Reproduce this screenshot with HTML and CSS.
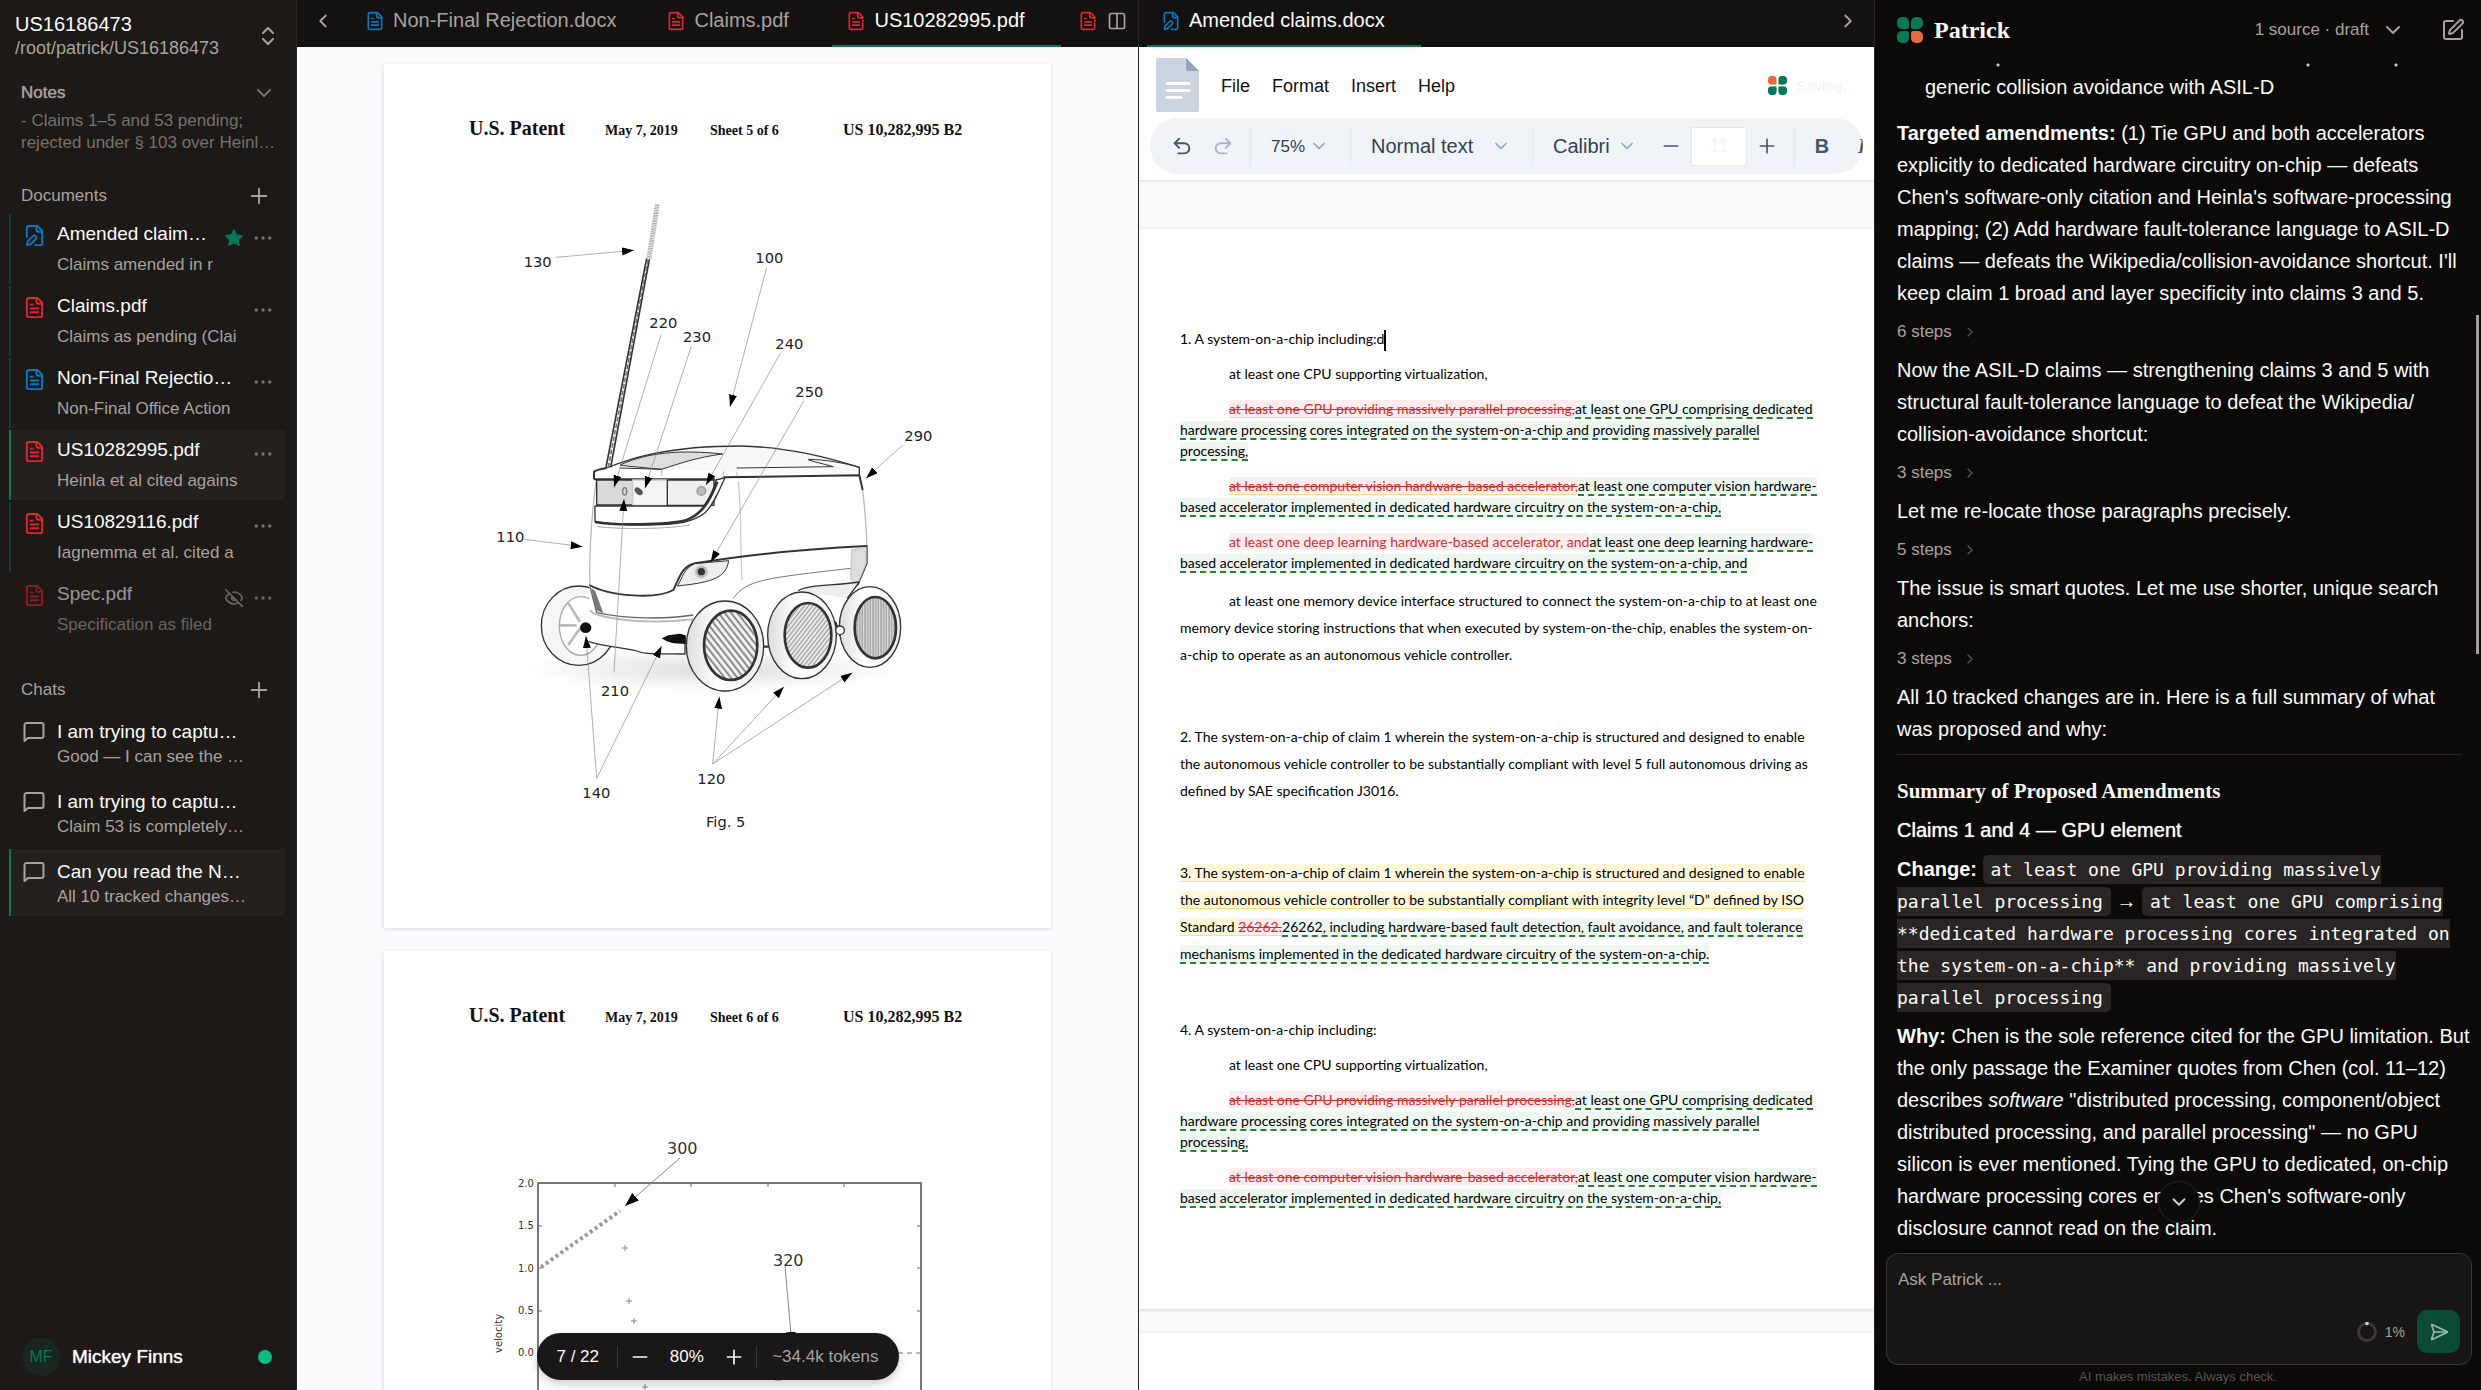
FILE: index.html
```html
<!DOCTYPE html>
<html lang="en">
<head>
<meta charset="utf-8">
<meta name="viewport" content="width=device-width, initial-scale=1">
<title>Patrick – US16186473</title>
<link rel="stylesheet" href="styles.css">
</head>
<body>
<svg class="sprite" aria-hidden="true">
  <symbol id="file" viewBox="0 0 24 24"><path d="M15 2H6a2 2 0 0 0-2 2v16a2 2 0 0 0 2 2h12a2 2 0 0 0 2-2V7Z"/><path d="M14 2v4a2 2 0 0 0 2 2h4M10 9H8M16 13H8M16 17H8"/></symbol>
  <symbol id="file-pen" viewBox="0 0 24 24"><path d="M12.5 22H18a2 2 0 0 0 2-2V7l-5-5H6a2 2 0 0 0-2 2v9.500"/><path d="M14 2v4a2 2 0 0 0 2 2h4"/><path d="M13.378 15.626a1 1 0 1 0-3.004-3.004l-5.010 5.012a2 2 0 0 0-.506.854l-.837 2.870a.5.5 0 0 0 .62.620l2.870-.837a2 2 0 0 0 .854-.506z"/></symbol>
  <symbol id="down" viewBox="0 0 24 24"><path d="m6 9 6 6 6-6"/></symbol>
  <symbol id="left" viewBox="0 0 24 24"><path d="m15 18-6-6 6-6"/></symbol>
  <symbol id="right" viewBox="0 0 24 24"><path d="m9 18 6-6-6-6"/></symbol>
  <symbol id="updown" viewBox="0 0 24 24"><path d="m7 15 5 5 5-5M7 9l5-5 5 5"/></symbol>
  <symbol id="plus" viewBox="0 0 24 24"><path d="M4 12h16M12 4v16"/></symbol>
  <symbol id="minus" viewBox="0 0 24 24"><path d="M4 12h16"/></symbol>
  <symbol id="star" viewBox="0 0 24 24"><path fill="currentColor" d="M12 2.500l2.900 6 6.600.9-4.800 4.600 1.200 6.500-5.900-3.100-5.900 3.100 1.200-6.500L2.500 9.400l6.600-.9z"/></symbol>
  <symbol id="dots" viewBox="0 0 24 24"><g fill="currentColor" stroke="none"><circle cx="3" cy="12" r="2.200"/><circle cx="12" cy="12" r="2.200"/><circle cx="21" cy="12" r="2.200"/></g></symbol>
  <symbol id="eye-off" viewBox="0 0 24 24"><path d="M10.700 5.100a10.700 10.700 0 0 1 11.200 6.500 1 1 0 0 1 0 .7 10.700 10.700 0 0 1-1.400 2.500M14.100 14.200a3 3 0 0 1-4.200-4.200M17.500 17.500a10.700 10.700 0 0 1-15.400-5.200 1 1 0 0 1 0-.7 10.700 10.700 0 0 1 4.400-5.100M2 2l20 20"/></symbol>
  <symbol id="message" viewBox="0 0 24 24"><path d="M21.500 16a2 2 0 0 1-2 2H6l-3.500 3V5a2 2 0 0 1 2-2h15a2 2 0 0 1 2 2z"/></symbol>
  <symbol id="columns" viewBox="0 0 24 24"><rect x="3" y="3" width="18" height="18" rx="2"/><path d="M12 3v18"/></symbol>
  <symbol id="undo" viewBox="0 0 24 24"><path d="M9 14 4 9l5-5"/><path d="M4 9h10.500a5.500 5.500 0 0 1 0 11H8"/></symbol>
  <symbol id="redo" viewBox="0 0 24 24"><path d="m15 14 5-5-5-5"/><path d="M20 9H9.500a5.500 5.500 0 0 0 0 11H16"/></symbol>
  <symbol id="compose" viewBox="0 0 24 24"><path d="M12 3H5a2 2 0 0 0-2 2v14a2 2 0 0 0 2 2h14a2 2 0 0 0 2-2v-7"/><path d="M18.375 2.625a1 1 0 0 1 3 3l-9.013 9.014a2 2 0 0 1-.853.505l-2.873.840a.5.5 0 0 1-.62-.62l.84-2.873a2 2 0 0 1 .506-.852z"/></symbol>
  <symbol id="send" viewBox="0 0 24 24"><path d="M3.714 3.048a.498.498 0 0 0-.683.627l2.843 7.627a2 2 0 0 1 0 1.396l-2.842 7.627a.498.498 0 0 0 .682.627l18-8.500a.5.5 0 0 0 0-.904z"/><path d="M6 12h16"/></symbol>
  <symbol id="petal" viewBox="0 0 12 12"><path d="M5 0h2a5 5 0 0 1 5 5v5a2 2 0 0 1-2 2H5a5 5 0 0 1-5-5V5a5 5 0 0 1 5-5z"/></symbol>
</svg>

<div class="app">
  <aside class="sidebar">
    <header class="matter">
      <div>
        <h1 class="matter-name">US16186473</h1>
        <p class="matter-path">/root/patrick/US16186473</p>
      </div>
      <button class="icon-btn" aria-label="Switch matter"><svg class="i24"><use href="#updown"/></svg></button>
    </header>

    <section class="notes">
      <div class="section-head"><h2>Notes</h2><button class="icon-btn dim" aria-label="Expand notes"><svg class="i24"><use href="#down"/></svg></button></div>
      <p class="notes-text">- Claims 1–5 and 53 pending;<br>rejected under § 103 over Heinl…</p>
    </section>

    <section class="docs">
      <div class="section-head"><h2>Documents</h2><button class="icon-btn" aria-label="Add document"><svg class="i22"><use href="#plus"/></svg></button></div>
      <ul class="list">
        <li class="doc"><svg class="i23 blue"><use href="#file-pen"/></svg><div class="doc-text"><a href="#">Amended claim…</a><p>Claims amended in r</p></div><svg class="i20 star"><use href="#star"/></svg><button class="icon-btn more" aria-label="More"><svg class="i18"><use href="#dots"/></svg></button></li>
        <li class="doc"><svg class="i23 red"><use href="#file"/></svg><div class="doc-text"><a href="#">Claims.pdf</a><p>Claims as pending (Clai</p></div><button class="icon-btn more" aria-label="More"><svg class="i18"><use href="#dots"/></svg></button></li>
        <li class="doc"><svg class="i23 blue"><use href="#file"/></svg><div class="doc-text"><a href="#">Non-Final Rejectio…</a><p>Non-Final Office Action</p></div><button class="icon-btn more" aria-label="More"><svg class="i18"><use href="#dots"/></svg></button></li>
        <li class="doc active"><svg class="i23 red"><use href="#file"/></svg><div class="doc-text"><a href="#">US10282995.pdf</a><p>Heinla et al cited agains</p></div><button class="icon-btn more" aria-label="More"><svg class="i18"><use href="#dots"/></svg></button></li>
        <li class="doc"><svg class="i23 red"><use href="#file"/></svg><div class="doc-text"><a href="#">US10829116.pdf</a><p>Iagnemma et al. cited a</p></div><button class="icon-btn more" aria-label="More"><svg class="i18"><use href="#dots"/></svg></button></li>
        <li class="doc hidden-doc"><svg class="i23 red"><use href="#file"/></svg><div class="doc-text"><a href="#">Spec.pdf</a><p>Specification as filed</p></div><svg class="i20 eye"><use href="#eye-off"/></svg><button class="icon-btn more" aria-label="More"><svg class="i18"><use href="#dots"/></svg></button></li>
      </ul>
    </section>

    <section class="chats">
      <div class="section-head"><h2>Chats</h2><button class="icon-btn" aria-label="New chat"><svg class="i22"><use href="#plus"/></svg></button></div>
      <ul class="list">
        <li class="chat"><svg class="i24"><use href="#message"/></svg><div class="chat-text"><a href="#">I am trying to captu…</a><p>Good — I can see the …</p></div></li>
        <li class="chat"><svg class="i24"><use href="#message"/></svg><div class="chat-text"><a href="#">I am trying to captu…</a><p>Claim 53 is completely…</p></div></li>
        <li class="chat active"><svg class="i24"><use href="#message"/></svg><div class="chat-text"><a href="#">Can you read the N…</a><p>All 10 tracked changes…</p></div></li>
      </ul>
    </section>

    <footer class="user"><span class="avatar">MF</span><span class="user-name">Mickey Finns</span><span class="online"></span></footer>
  </aside>

  <main class="viewer">
    <nav class="tabs">
      <button class="icon-btn nav-btn" aria-label="Scroll tabs left"><svg class="i22"><use href="#left"/></svg></button>
      <div class="tab-strip">
        <a class="tab" href="#"><svg class="i20 blue"><use href="#file"/></svg>Non-Final Rejection.docx</a>
        <a class="tab" href="#"><svg class="i20 red"><use href="#file"/></svg>Claims.pdf</a>
        <a class="tab current" href="#"><svg class="i20 red"><use href="#file"/></svg>US10282995.pdf</a>
        <a class="tab cut" href="#" aria-label="US10829116.pdf"><svg class="i20 red"><use href="#file"/></svg></a>
      </div>
      <button class="icon-btn split-btn" aria-label="Split view"><svg class="i20"><use href="#columns"/></svg></button>
    </nav>
    <div class="pdf">
      <article class="sheet">
        <header class="sheet-head"><strong class="pat">U.S. Patent</strong><b>May 7, 2019</b><b>Sheet 5 of 6</b><b class="num">US 10,282,995 B2</b></header>
        <svg class="robot" viewBox="0 0 1440 2040" role="img" aria-label="Fig. 5, six-wheeled robot">
          <defs>
            <marker id="arrow" markerUnits="userSpaceOnUse" markerWidth="38" markerHeight="26" refX="36" refY="12" orient="auto"><path d="M0 0 36 12 0 24z" fill="#000"/></marker>
            <pattern id="hatch" width="15" height="15" patternUnits="userSpaceOnUse" patternTransform="rotate(-38)"><rect width="15" height="15" fill="#f2f2f2"/><path d="M4 0v15" stroke="#777" stroke-width="5"/></pattern>
            <pattern id="hatch2" width="10" height="10" patternUnits="userSpaceOnUse" patternTransform="rotate(38)"><rect width="10" height="10" fill="#eee"/><path d="M3 0v10" stroke="#888" stroke-width="3"/></pattern>
            <pattern id="hatch3" width="8" height="8" patternUnits="userSpaceOnUse"><rect width="8" height="8" fill="#ddd"/><path d="M3 0v8" stroke="#888" stroke-width="3"/></pattern>
            <linearGradient id="tube"><stop offset="0" stop-color="#ddd"/><stop offset=".4" stop-color="#fff"/><stop offset="1" stop-color="#eee"/></linearGradient>
            <radialGradient id="ground"><stop offset="0" stop-color="#aaa"/><stop offset="1" stop-color="#fff"/></radialGradient>
          </defs>
          <ellipse cx="700" cy="1468" rx="560" ry="66" fill="url(#ground)" opacity=".4"/>
          <g fill="none" stroke="#333" stroke-width="4">
            <ellipse cx="296" cy="1337" rx="112" ry="119" fill="#f6f6f6"/>
            <ellipse cx="302" cy="1338" rx="64" ry="88" fill="#fff" stroke="#aaa"/>
            <path d="M240 1336h50M265 1270l35 55M265 1395l35-50" stroke="#bbb" stroke-width="8"/>
            <path d="M348 900C335 1010 326 1110 328 1215L325 1385C380 1400 450 1404 480 1416L615 1422 900 1400 1100 1255 1135 1210 1160 1150V1098C1160 1030 1154 970 1146 930L1138 885V862Z" fill="#fff" stroke="none"/>
            <path d="M326 1385C380 1402 450 1404 480 1416 500 1425 560 1420 615 1422V1370"/>
            <path d="M348 905C335 1010 326 1110 330 1215M1148 930C1156 1000 1160 1050 1160 1098" stroke="#bbb"/>
            <path d="M775 905C785 1000 780 1080 786 1200M765 865l8 22M545 868v22M730 865v22" stroke="#ccc"/>
            <path d="M380 864C450 835 560 798 780 798 930 800 1060 838 1138 862V886" fill="#f8f8f8"/>
            <path d="M420 855C500 818 600 808 728 822 650 832 600 850 545 868L440 858Z" fill="#ddd" stroke-width="3"/>
            <path d="M985 838C1030 838 1100 850 1138 862M985 840l75 20M420 864 545 868M770 864l290-4" stroke-width="3"/>
            <path d="M342 898V876Q345 870 380 864M342 898H705M730 892L1138 886M1138 886L1148 930" stroke-width="6"/>
            <rect x="350" y="900" width="108" height="75" fill="#d9d9d9"/>
            <rect x="458" y="900" width="104" height="76" fill="#f5f5f5" stroke="#ccc"/>
            <rect x="562" y="900" width="140" height="76" fill="#eee"/>
            <path d="M345 978H672C692 950 702 925 708 900L735 893 C715 935 700 975 675 998 630 1035 560 1035 480 1035 430 1035 380 1030 345 1025Z" fill="#fff"/>
            <path d="M345 1026C400 1036 560 1036 620 1020 670 1000 690 960 712 905" stroke-width="8"/>
            <path d="M350 1040C420 1048 560 1048 630 1035" stroke="#aaa" stroke-width="3"/>
            <ellipse cx="476" cy="934" rx="14" ry="9" transform="rotate(40 476 934)" fill="#555" stroke="none"/>
            <ellipse cx="434" cy="934" rx="6" ry="11" stroke="#777"/>
            <circle cx="664" cy="933" r="13" fill="#bbb" stroke="#999"/>
            <path d="M328 1215C390 1250 530 1258 580 1230 600 1190 605 1160 645 1150 800 1124 1000 1106 1160 1098V1150L1132 1215" stroke-width="6"/>
            <path d="M1115 1110 1158 1102V1150L1132 1212 1112 1200Z" fill="#ddd" stroke="#ccc"/>
            <path d="M592 1218C680 1208 738 1200 746 1142L645 1151C610 1165 608 1195 592 1218Z" fill="#eee" stroke-width="3"/>
            <circle cx="664" cy="1175" r="20" fill="#bbb" stroke="#ddd"/><circle cx="664" cy="1175" r="11" fill="#333" stroke="none"/>
            <path d="M330 1220 350 1298C440 1318 560 1318 640 1305" stroke="#666"/>
            <path d="M334 1225 348 1290 370 1300 345 1232Z" fill="#777" stroke="none"/>
            <path d="M330 1290C340 1315 500 1335 640 1318" stroke="#bbb" stroke-width="6"/>
            <path d="M760 1255C800 1200 850 1195 1112 1165" stroke="#777" stroke-width="3"/>
            <path d="M955 1232C980 1215 1050 1218 1138 1206L1102 1255" fill="#eee"/>
            <path d="M850 1400h22M1065 1325l20 50" stroke-width="7"/>
            <ellipse cx="1170" cy="1341" rx="92" ry="121" fill="url(#tube)"/>
            <ellipse cx="1186" cy="1343" rx="62" ry="92" fill="url(#hatch3)" stroke-width="8"/>
            <ellipse cx="966" cy="1366" rx="103" ry="130" fill="url(#tube)"/>
            <ellipse cx="984" cy="1366" rx="70" ry="97" fill="url(#hatch2)" stroke-width="8"/>
            <ellipse cx="735" cy="1398" rx="116" ry="135" fill="url(#tube)"/>
            <ellipse cx="752" cy="1396" rx="80" ry="104" fill="url(#hatch)" stroke-width="8"/>
            <circle cx="1080" cy="1351" r="13" fill="#fff"/>
            <ellipse cx="317" cy="1343" rx="17" ry="16" fill="#111" stroke="none"/>
            <path d="M545 1375 565 1366 600 1361 617 1366V1392L580 1390 560 1384Z" fill="#111" stroke="none"/>
            <path d="M378 862 500 235M392 862 508 238" stroke-width="5"/>
            <path d="M385 862 504 238" stroke="#777" stroke-width="5" stroke-dasharray="14 6"/>
            <path d="M507 236 532 72" stroke="#aaa" stroke-width="15" stroke-dasharray="3 2"/>
          </g>
          <g class="leads">
            <path d="M228 232 462 211"/><path d="M860 262 750 680"/>
            <path d="M543 465 402 922"/><path d="M634 498 495 925"/>
            <path d="M902 518 678 915"/><path d="M972 662 692 1147"/>
            <path d="M1268 795 1158 895"/><path d="M132 1078 308 1100"/>
            <path d="M402 1477 432 957"/><path d="M350 1795 318 1368"/>
            <path d="M350 1795 545 1398"/><path d="M698 1752 718 1550"/>
            <path d="M698 1752 912 1520"/><path d="M698 1752 1117 1478"/>
          </g>
          <g class="fig-text">
            <text x="131" y="262">130</text><text x="826" y="250">100</text><text x="508" y="445">220</text><text x="609" y="486">230</text><text x="886" y="506">240</text><text x="946" y="650">250</text><text x="1273" y="782">290</text><text x="49" y="1087">110</text><text x="363" y="1548">210</text><text x="307" y="1855">140</text><text x="652" y="1813">120</text><text x="678" y="1942">Fig. 5</text>
          </g>
        </svg>
      </article>
      <article class="sheet">
        <header class="sheet-head"><strong class="pat">U.S. Patent</strong><b>May 7, 2019</b><b>Sheet 6 of 6</b><b class="num">US 10,282,995 B2</b></header>
        <svg class="plot" viewBox="384 1067 667 400" role="img" aria-label="Velocity plot">
          <defs><marker id="arrow-s" markerUnits="userSpaceOnUse" markerWidth="16" markerHeight="12" refX="14" refY="5" orient="auto"><path d="M0 0 14 5 0 10z" fill="#000" stroke="none"/></marker></defs>
          <path d="M538 1467V1183H921V1467" fill="none" stroke="#777" stroke-width="2"/>
          <path d="M615 1183v4M691 1183v4M768 1183v4M844 1183v4M538 1226h4M538 1268h4M538 1311h4M917 1226h4M917 1268h4M917 1311h4" stroke="#666" stroke-width="1"/>
          <path d="M538 1353H921" stroke="#777" stroke-width="1" stroke-dasharray="5 4"/>
          <path d="M541 1267 620 1211" stroke="#999" stroke-width="4" stroke-dasharray="3 3"/>
          <path d="M622 1248h6M625 1245v6M626 1301h6M629 1298v6M631 1321h6M634 1318v6M642 1387h6M645 1384v6M775 1380h6" stroke="#888" stroke-width="1"/>
          <path d="M680 1158 625 1206" stroke="#888" stroke-width="1" marker-end="url(#arrow-s)"/>
          <path d="M785 1266 792 1346" stroke="#888" stroke-width="1" marker-end="url(#arrow-s)"/>
          <g class="plot-label"><text x="667" y="1154">300</text><text x="773" y="1266">320</text></g>
          <g class="plot-axis"><text x="518" y="1187">2.0</text><text x="518" y="1229">1.5</text><text x="518" y="1272">1.0</text><text x="518" y="1314">0.5</text><text x="518" y="1356">0.0</text><text transform="translate(502 1353) rotate(-90)">velocity</text></g>
        </svg>
      </article>
      <div class="pager">
        <span class="pages">7 / 22</span>
        <div class="zoom"><button class="icon-btn" aria-label="Zoom out"><svg class="i20"><use href="#minus"/></svg></button><span>80%</span><button class="icon-btn" aria-label="Zoom in"><svg class="i20"><use href="#plus"/></svg></button></div>
        <span class="tokens">~34.4k tokens</span>
      </div>
    </div>
  </main>

  <section class="editor">
    <nav class="tabs">
      <div class="tab-strip first"><a class="tab current" href="#"><svg class="i20 blue"><use href="#file-pen"/></svg>Amended claims.docx</a></div>
      <button class="icon-btn next-btn" aria-label="Scroll tabs right"><svg class="i22"><use href="#right"/></svg></button>
    </nav>
    <header class="doc-head">
      <div class="menu-row">
        <svg class="doc-logo" viewBox="0 0 43 54"><path d="M2 0H30L43 13V52a2 2 0 0 1-2 2H2a2 2 0 0 1-2-2V2a2 2 0 0 1 2-2z" fill="#cbd5e1"/><path d="M30 0 43 13H32a2 2 0 0 1-2-2z" fill="#94a3b8"/><path d="M11 25.500H33M11 32.500H33M11 39.500H25" stroke="#fff" stroke-width="3" stroke-linecap="round"/></svg>
        <div class="menus"><button>File</button><button>Format</button><button>Insert</button><button>Help</button></div>
        <div class="saving"><svg class="clover small" viewBox="0 0 26 26"><use class="o" href="#petal" x="0" y="0" width="12" height="12"/><use href="#petal" width="12" height="12" transform="translate(26 0) scale(-1 1)"/><use href="#petal" width="12" height="12" transform="translate(0 26) scale(1 -1)"/><use href="#petal" width="12" height="12" transform="translate(26 26) scale(-1 -1)"/></svg><span>Saving…</span></div>
      </div>
      <div class="toolbar">
        <button class="tool" aria-label="Undo"><svg class="i22"><use href="#undo"/></svg></button>
        <button class="tool off" aria-label="Redo"><svg class="i22"><use href="#redo"/></svg></button>
        <span class="rule"></span>
        <label class="pick zoom-pick"><select aria-label="Zoom"><option>75%</option></select><svg class="i20"><use href="#down"/></svg></label>
        <span class="rule"></span>
        <label class="pick style-pick"><select aria-label="Style"><option>Normal text</option></select><svg class="i20"><use href="#down"/></svg></label>
        <span class="rule"></span>
        <label class="pick font-pick"><select aria-label="Font"><option>Calibri</option></select><svg class="i20"><use href="#down"/></svg></label>
        <button class="tool" aria-label="Smaller"><svg class="i20"><use href="#minus"/></svg></button>
        <input class="size" aria-label="Font size" value="11">
        <button class="tool" aria-label="Larger"><svg class="i20"><use href="#plus"/></svg></button>
        <span class="rule tight"></span>
        <button class="tool letter">B</button>
        <button class="tool letter ital">I</button>
      </div>
    </header>
    <div class="canvas">
      <article class="paper">
        <p>1. A system-on-a-chip including:d<span class="caret"></span></p>
        <p class="in">at least one CPU supporting virtualization,</p>
        <p class="in"><del class="note">at least one GPU providing massively parallel processing,</del><ins>at least one GPU comprising dedicated <br>hardware processing cores integrated on the system-on-a-chip and providing massively parallel <br>processing,</ins></p>
        <p class="in"><del class="note">at least one computer vision hardware-based accelerator,</del><ins>at least one computer vision hardware-<br>based accelerator implemented in dedicated hardware circuitry on the system-on-a-chip,</ins></p>
        <p class="in"><del class="plain">at least one deep learning hardware-based accelerator, and</del><ins>at least one deep learning hardware-<br>based accelerator implemented in dedicated hardware circuitry on the system-on-a-chip, and</ins></p>
        <p class="in wide">at least one memory device interface structured to connect the system-on-a-chip to at least one<br>memory device storing instructions that when executed by system-on-the-chip, enables the system-on-<br>a-chip to operate as an autonomous vehicle controller.</p>
        <p class="wide claim">2. The system-on-a-chip of claim 1 wherein the system-on-a-chip is structured and designed to enable<br>the autonomous vehicle controller to be substantially compliant with level 5 full autonomous driving as<br>defined by SAE specification J3016.</p>
        <p class="wide claim"><mark>3. The system-on-a-chip of claim 1 wherein the system-on-a-chip is structured and designed to enable <br>the autonomous vehicle controller to be substantially compliant with integrity level “D” defined by ISO <br>Standard </mark><del class="note">26262.</del><ins>26262, including hardware-based fault detection, fault avoidance, and fault tolerance <br>mechanisms implemented in the dedicated hardware circuitry of the system-on-a-chip.</ins></p>
        <p class="claim-next">4. A system-on-a-chip including:</p>
        <p class="in">at least one CPU supporting virtualization,</p>
        <p class="in"><del>at least one GPU providing massively parallel processing,</del><ins>at least one GPU comprising dedicated <br>hardware processing cores integrated on the system-on-a-chip and providing massively parallel <br>processing,</ins></p>
        <p class="in"><del>at least one computer vision hardware-based accelerator,</del><ins>at least one computer vision hardware-<br>based accelerator implemented in dedicated hardware circuitry on the system-on-a-chip,</ins></p>
      </article>
      <article class="paper next"></article>
    </div>
  </section>

  <section class="assistant">
    <header class="asst-head">
      <svg class="clover" viewBox="0 0 26 26"><use href="#petal" x="0" y="0" width="12" height="12"/><use href="#petal" width="12" height="12" transform="translate(26 0) scale(-1 1)"/><use href="#petal" width="12" height="12" transform="translate(0 26) scale(1 -1)"/><use class="o" href="#petal" width="12" height="12" transform="translate(26 26) scale(-1 -1)"/></svg>
      <h2 class="brand">Patrick</h2>
      <button class="source">1 source · draft<svg class="i24"><use href="#down"/></svg></button>
      <button class="icon-btn" aria-label="New chat"><svg class="i24"><use href="#compose"/></svg></button>
    </header>
    <div class="thread">
      <div class="tail"></div>
      <p class="bullet">generic collision avoidance with ASIL-D</p>
      <p class="amend"><strong>Targeted amendments:</strong> (1) Tie GPU and both accelerators<br>explicitly to dedicated hardware circuitry on-chip — defeats<br>Chen's software-only citation and Heinla's software-processing<br>mapping; (2) Add hardware fault-tolerance language to ASIL-D<br>claims — defeats the Wikipedia/collision-avoidance shortcut. I'll<br>keep claim 1 broad and layer specificity into claims 3 and 5.</p>
      <button class="steps">6 steps<svg class="i16"><use href="#right"/></svg></button>
      <p>Now the ASIL-D claims — strengthening claims 3 and 5 with<br>structural fault-tolerance language to defeat the Wikipedia/<br>collision-avoidance shortcut:</p>
      <button class="steps">3 steps<svg class="i16"><use href="#right"/></svg></button>
      <p>Let me re-locate those paragraphs precisely.</p>
      <button class="steps">5 steps<svg class="i16"><use href="#right"/></svg></button>
      <p>The issue is smart quotes. Let me use shorter, unique search<br>anchors:</p>
      <button class="steps">3 steps<svg class="i16"><use href="#right"/></svg></button>
      <p>All 10 tracked changes are in. Here is a full summary of what<br>was proposed and why:</p>
      <hr>
      <h3>Summary of Proposed Amendments</h3>
      <h4>Claims 1 and 4 — GPU element</h4>
      <p class="gap"><strong>Change:</strong> <code>at least one GPU providing massively<br>parallel processing</code> → <code>at least one GPU comprising<br>**dedicated hardware processing cores integrated on<br>the system-on-a-chip** and providing massively<br>parallel processing</code></p>
      <p class="gap"><strong>Why:</strong> Chen is the sole reference cited for the GPU limitation. But<br>the only passage the Examiner quotes from Chen (col. 11–12)<br>describes <em>software</em> "distributed processing, component/object<br>distributed processing, and parallel processing" — no GPU<br>silicon is ever mentioned. Tying the GPU to dedicated, on-chip<br>hardware processing cores ensures Chen's software-only<br>disclosure cannot read on the claim.</p>
      <span class="scrollbar"></span>
      <button class="to-bottom" aria-label="Scroll to bottom"><svg class="i22"><use href="#down"/></svg></button>
    </div>
    <form class="composer">
      <textarea aria-label="Message" placeholder="Ask Patrick ..."></textarea>
      <div class="composer-row">
        <svg class="ring" viewBox="0 0 20 20"><circle cx="10" cy="10" r="8.500" fill="none" stroke="#3a3734" stroke-width="3"/><circle cx="10" cy="1.500" r="1.800" fill="#d6d3d1"/></svg>
        <span class="pct">1%</span>
        <button class="send" type="button" aria-label="Send"><svg class="i20"><use href="#send"/></svg></button>
      </div>
    </form>
    <p class="disclaimer">AI makes mistakes. Always check.</p>
  </section>
</div>
</body>
</html>
```
FILE: styles.css
```css
* { box-sizing: border-box; }
body, h1, h2, h3, h4, p, ul { margin: 0; padding: 0; }
body {
  font-family: "Liberation Sans", Arial, sans-serif;
  font-size: 20px;
  background: #0c0a09;
  color: #fafaf9;
}
button, select, input, textarea { font: inherit; color: inherit; margin: 0; padding: 0; border: 0; background: none; }
a { color: inherit; text-decoration: none; }
ul { list-style: none; }
svg { fill: none; stroke: currentColor; stroke-width: 2; stroke-linecap: round; stroke-linejoin: round; flex: none; display: block; }
.robot, .plot, .doc-logo, .ring, .clover { stroke: none; stroke-linecap: butt; }
.sprite { position: absolute; width: 0; height: 0; }
.i16 { width: 16px; height: 16px; }
.i18 { width: 18px; height: 18px; }
.i20 { width: 20px; height: 20px; }
.i22 { width: 22px; height: 22px; }
.i23 { width: 23px; height: 23px; }
.i24 { width: 24px; height: 24px; }
.blue { color: #0a77bd; }
.red { color: #dc2630; }
.icon-btn { display: flex; color: #a8a29e; }

.app {
  display: grid;
  grid-template-columns: 297px minmax(0, 841fr) minmax(0, 736fr) 607px;
  height: 100vh;
  overflow: hidden;
}

/* Sidebar */
.sidebar { display: flex; flex-direction: column; background: #1c1917; border-right: 1px solid #292524; min-height: 0; }
.matter { display: flex; justify-content: space-between; align-items: center; padding: 8px 16px 0 15px; height: 64px; }
.matter-name { font-size: 20px; font-weight: 400; line-height: 24px; }
.matter-path { font-size: 18px; line-height: 24px; color: #a8a29e; }
.section-head { display: flex; justify-content: space-between; align-items: center; height: 28px; padding: 0 20px 0 21px; }
.section-head h2 { font-size: 17px; font-weight: 400; color: #a8a29e; }
.notes { padding-top: 15px; }
.notes .section-head h2 { text-shadow: 0 0 1px #a8a29e; }
.dim { color: #78716c; }
.notes-text { padding: 3px 12px 0 21px; font-size: 17px; line-height: 22px; color: #78716c; white-space: nowrap; }
.docs { padding-top: 28px; }
.docs .section-head, .chats .section-head { padding-right: 26px; }
.docs .list { padding-top: 4px; }
.list { display: flex; flex-direction: column; gap: 3px; padding: 0 11px 0 9px; }
.docs .list { gap: 2px; }
.doc, .chat { display: flex; border-left: 2px solid transparent; }
.doc { height: 70px; padding: 10px 13px 0 12px; gap: 11px; border-left-color: #123e2f; }
.doc.active, .chat.active { background: #24201e; border-left-color: #047857; }
.doc.hidden-doc { border-left-color: transparent; opacity: .55; }
.doc-text, .chat-text { flex: 1; min-width: 0; white-space: nowrap; overflow: hidden; }
.doc-text a, .chat-text a { display: block; font-size: 19px; line-height: 24px; }
.doc-text p { font-size: 17px; line-height: 22px; padding-top: 8px; height: 32px; color: #a8a29e; }
.doc-text { margin-top: -2px; }
.star { color: #047857; margin: 4px -1px 0 -6px; }
.eye { color: #a8a29e; margin: 4px -1px 0 -6px; }
.more { margin-top: 4px; height: 20px; align-items: center; color: #78716c; }
.hidden-doc .more { color: #a8a29e; }
.chats { padding-top: 32px; }
.chats .list { padding-top: 5px; }
.chat { height: 67px; padding: 11px 30px 0 11px; gap: 11px; color: #a8a29e; }
.chat a { color: #fafaf9; }
.chat-text p { font-size: 17px; line-height: 25px; }
.user { display: flex; align-items: center; gap: 12px; margin-top: auto; padding: 0 24px 14px 22px; }
.avatar { width: 38px; height: 38px; border-radius: 50%; background: #19271f; color: #047857; font-size: 16px; line-height: 38px; text-align: center; }
.user-name { flex: 1; font-size: 19px; text-shadow: 0 0 1px #fafaf9; }
.online { width: 14px; height: 14px; border-radius: 50%; background: #10b981; }

/* Tabs */
.tabs { display: flex; align-items: center; height: 47px; background: #141210; flex: none; }
.tab-strip { display: flex; flex: 1; min-width: 0; height: 47px; overflow: hidden; }
.tab-strip.first { padding-left: 8px; }
.tab { display: flex; flex: none; align-items: center; gap: 8px; min-width: 180px; padding: 0 36px 4px 14px; border-bottom: 2px solid transparent; color: #a8a29e; white-space: nowrap; }
.tab.current { color: #fafaf9; border-color: #047857; }
.tab.cut { padding-left: 17px; }
.nav-btn { width: 54px; padding: 0 0 6px 15px; }
.split-btn { padding: 0 11px 6px 10px; }
.next-btn { padding: 0 15px 6px 0; }

/* PDF viewer */
.viewer, .editor { display: flex; flex-direction: column; min-width: 0; min-height: 0; }
.pdf { position: relative; flex: 1; min-height: 0; overflow: hidden; display: flex; flex-direction: column; align-items: center; gap: 23px; padding-top: 17px; background: #f8fafc; color: #111; }
.sheet { flex: none; width: 667px; height: 864px; background: #fff; box-shadow: 0 1px 4px rgba(15, 23, 42, .14); }
.sheet-head { display: grid; grid-template-columns: 136px 105px 133px auto; align-items: baseline; height: 116px; padding: 53px 0 0 85px; font-family: "Liberation Serif", "Times New Roman", serif; font-size: 14px; }
.sheet-head .pat { font-size: 20px; }
.sheet-head .num { font-size: 16px; }
.robot { width: 480px; height: 680px; margin-left: 96px; }
.plot { width: 667px; height: 400px; }
.leads path { stroke: #888; stroke-width: 2; marker-end: url(#arrow); }
.fig-text { font: 44px "DejaVu Sans", sans-serif; fill: #222; }
.plot-label { font: 16px "DejaVu Sans", sans-serif; fill: #333; }
.plot-axis { font: 10px "DejaVu Sans", sans-serif; fill: #333; }
.pager { position: absolute; bottom: 10px; left: 50%; transform: translateX(-50%); display: flex; align-items: center; width: 362px; height: 47px; padding: 0 20px; border-radius: 24px; background: #1a1718; color: #fafaf9; font-size: 17px; box-shadow: 0 4px 10px rgba(0, 0, 0, .2); }
.pages { width: 60px; }
.zoom { display: flex; flex: 1; align-items: center; justify-content: space-between; height: 22px; padding: 0 12px; border: solid #3a3735; border-width: 0 1px; }
.zoom .icon-btn { color: #fafaf9; }
.tokens { padding-left: 15px; color: #a8a29e; }

/* Editor */
.editor { border-left: 1px solid #292524; background: #f8fafc; color: #111; }
.doc-head { flex: none; height: 133px; background: #fff; padding-top: 11px; box-shadow: 0 1px 2px rgba(15, 23, 42, .12); overflow: hidden; }
.menu-row { display: flex; align-items: center; height: 54px; padding: 0 17px; }
.doc-logo { width: 43px; height: 54px; }
.menus { display: flex; flex: 1; gap: 22px; padding: 2px 0 0 22px; font-size: 18px; }
.saving { display: flex; align-items: center; gap: 9px; color: #f5f5f4; font-size: 15px; }
.clover { width: 26px; height: 26px; fill: #047857; }
.clover .o { fill: #e8693f; }
.clover.small { width: 19px; height: 19px; }
.toolbar { display: flex; align-items: center; height: 56px; margin: 6px 11px 0; padding-left: 21px; border-radius: 28px; background: #f0f4f9; color: #475569; overflow: hidden; }
.tool { display: flex; flex: none; justify-content: center; width: 40px; }
.toolbar > .tool:first-child { width: 22px; margin-right: 10px; }
.tool.off { opacity: .4; }
.rule { flex: none; width: 1px; height: 42px; margin: 0 20px 0 7px; background: #e2e8f0; }
.rule.tight { margin-right: 7px; }
.pick { position: relative; display: flex; flex: none; align-items: center; }
.pick select { appearance: none; width: 100%; color: #334155; }
.pick svg { position: absolute; right: 14px; color: #94a3b8; pointer-events: none; }
.zoom-pick { width: 72px; font-size: 17px; }
.style-pick { width: 154px; }
.font-pick { width: 98px; }
.size { flex: none; width: 56px; height: 39px; border: 1px solid #e2e8f0; background: #fff; color: #f5f5f4; text-align: center; font-size: 18px; }
.letter { font-weight: 700; }
.ital { font-style: italic; font-family: "Liberation Serif", serif; }
.canvas { flex: 1; min-height: 0; overflow: hidden; padding-top: 49px; display: flex; flex-direction: column; gap: 24px; }
.paper { flex: none; height: 1080px; padding: 99px 20px 0 41px; background: #fff; box-shadow: 0 1px 4px rgba(15, 23, 42, .16); font-family: Lato, sans-serif; font-size: 14px; line-height: 21px; white-space: nowrap; color: #000; display: flex; flex-direction: column; gap: 14px; }
.paper.next { height: 400px; }
.in { text-indent: 49px; }
.wide { line-height: 27px; }
.claim { margin-top: 41px; }
.claim-next { margin-top: 38px; }
.caret { display: inline-block; width: 2px; height: 21px; background: #000; vertical-align: middle; margin: -4px 0; }
ins { text-decoration: none; background: #edf7f0; border-bottom: 2px dashed #2e7d32; }
del { color: #d32f2f; background: #fdeced; }
del.note { border-bottom: 1px solid #ffd97a; }
del.plain { text-decoration: none; }
mark { color: inherit; background: #fff7da; border-bottom: 1px solid #ffe17a; }

/* Assistant */
.assistant { display: flex; flex-direction: column; min-height: 0; border-left: 1px solid #292524; background: #0c0a09; }
.asst-head { display: flex; align-items: center; flex: none; height: 62px; padding: 0 16px 2px 22px; }
.brand { flex: 1; padding-left: 11px; font: 700 24px/30px "Liberation Serif", serif; }
.source { display: flex; align-items: center; gap: 12px; margin-right: 36px; color: #a8a29e; font-size: 17px; }
.thread { position: relative; flex: 1; min-height: 0; overflow: hidden; padding: 0 19px 0 22px; line-height: 32px; white-space: nowrap; }
.tail { height: 9px; background: radial-gradient(circle at 101px 3px, #ccc 1px, transparent 2px), radial-gradient(circle at 411px 3px, #ccc 1px, transparent 2px), radial-gradient(circle at 499px 3px, #ccc 1px, transparent 2px); }
.bullet { padding-left: 28px; }
.amend { margin-top: 14px; }
.steps { display: flex; align-items: center; gap: 10px; height: 45px; font-size: 17px; color: #a8a29e; }
.steps svg { color: #57534e; }
hr { margin: 9px 0 20px; border: 0; border-top: 1px solid #292524; }
h3 { font: 700 21px/32px "Liberation Serif", serif; }
h4 { margin-top: 7px; font-size: 20px; font-weight: 400; text-shadow: 0 0 1px #fafaf9; }
.gap { margin-top: 7px; }
code { padding: 4px 8px; border-radius: 5px; background: #292524; font: 18px "DejaVu Sans Mono", monospace; }
.scrollbar { position: absolute; top: 253px; right: 2px; width: 3px; height: 339px; background: #a09c99; }
.to-bottom { position: absolute; bottom: 22px; left: 50%; display: grid; place-items: center; width: 42px; height: 42px; margin-left: -20px; border: 1px solid #292524; border-radius: 50%; background: #0c0a09; color: #d6d3d1; }
.composer { display: flex; flex-direction: column; flex: none; height: 112px; margin: 8px 9px 0 11px; padding: 14px 11px 11px; border: 1px solid #3a3735; border-radius: 12px; background: #171614; }
.composer textarea { flex: 1; min-height: 0; resize: none; outline: 0; font-size: 17px; line-height: 24px; overflow: hidden; }
.composer textarea::placeholder { color: #a8a29e; opacity: 1; }
.composer-row { display: flex; align-items: center; justify-content: flex-end; }
.ring { width: 20px; height: 20px; }
.pct { padding: 0 12px 0 8px; font-size: 14px; color: #a8a29e; }
.send { display: grid; place-items: center; width: 43px; height: 43px; border-radius: 10px; background: #0b4a35; color: #9db8ad; }
.disclaimer { flex: none; height: 25px; font-size: 13px; line-height: 24px; text-align: center; color: #57534e; }
```
